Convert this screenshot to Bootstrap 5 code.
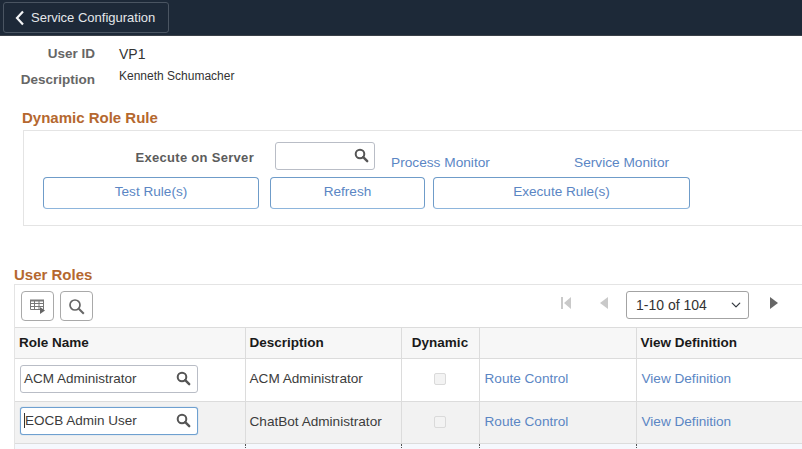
<!DOCTYPE html>
<html lang="en">
<head>
  <meta charset="UTF-8">
  <title>Service Configuration</title>
  <link href="https://cdn.jsdelivr.net/npm/bootstrap@5.3.2/dist/css/bootstrap.min.css" rel="stylesheet">
  <style>
    html, body { height: 449px; overflow: hidden; }
    body { font-family: "Liberation Sans", Arial, sans-serif; font-size: 14px; color: #333; background: #fff; }
    .top-bar { height: 36px; background: #1d2938; padding: 2px 3px; border-bottom: 1px solid #3a4048; }
    .back-btn { width: 166px; height: 31px; gap: 6px; padding: 0 0 0 11px; font-size: 13px; color: #e4e7ea; background: #1d2938; border: 1px solid #4a5562; border-radius: 3px; }
    .back-btn:hover { color: #fff; }
    .info-area { padding-top: 8px; }
    .info-row { display: flex; }
    .info-label { width: 95px; text-align: right; font-weight: 700; font-size: 13.500px; color: #666; }
    .info-value { margin-left: 24px; color: #333; }
    .row-id { height: 23px; line-height: 20px; }
    .row-desc { height: 27px; }
    .row-desc .info-label { line-height: 25px; }
    .row-desc .info-value { font-size: 12px; line-height: 19px; }
    .section-title { font-size: 15px; font-weight: 700; color: #b5682f; line-height: 18px; margin: 0; }
    .rule-title { margin: 15px 0 3px 22px; }
    .rule-box { margin-left: 23px; height: 96px; border: 1px solid #e4e4e4; border-right: 0; padding: 11px 0 0 19px; }
    .server-row { height: 35px; }
    .server-label { width: 211px; text-align: right; font-weight: 700; font-size: 13px; color: #5c5c5c; line-height: 31px; letter-spacing: .3px; }
    .prompt { position: relative; display: block; border: 1px solid #b9bdc6; border-radius: 3px; background: #fff; }
    .prompt svg { position: absolute; top: 5px; right: 6px; }
    .server-prompt { width: 100px; height: 28px; margin-left: 21px; }
    .server-prompt svg { right: 5px; }
    .mon-link { font-size: 13.700px; color: #5b86c4; text-decoration: none; line-height: 16px; margin-top: 13px; }
    .mon-first { margin-left: 16px; width: 183px; }
    .rule-btns { gap: 11px; }
    .rule-btn { height: 32px; padding: 0 0 1px; font-size: 13.600px; color: #5b86c4; background: #fff; border: 1px solid #6f9cc9; border-bottom-color: #8db5dc; border-radius: 4px; }
    .rule-btn:hover { color: #3c6cb0; background: #fff; border-color: #6f9cc9; }
    .b-test { width: 216px; }
    .b-refresh { width: 155px; }
    .b-exec { width: 257px; margin-left: -3px; }
    .roles-title { margin: 40px 0 0 14px; }
    .roles-box { margin-left: 14px; border: 1px solid #e4e4e4; border-right: 0; border-bottom: 0; }
    .grid-tools { height: 42px; padding: 6px 0 0 6px; gap: 6px; }
    .tool-btn { width: 33px; height: 30px; padding: 0; background: #fff; border: 1px solid #a9a9a9; border-radius: 4px; }
    .pager { margin-left: auto; }
    .pager svg { margin-top: 5px; }
    .pager .pager-first { margin-right: 29px; }
    .pager .pager-prev { margin-right: 18px; }
    .page-pick { width: 123px; height: 28px; padding: 0 0 0 9px; font-size: 14px; color: #333; border: 1px solid #a3a3a3; border-radius: 3px; background-position: right 6px center; background-size: 12px 10px; }
    .pager .pager-next { margin-left: 21px; margin-right: 24px; }
    .roles-grid { table-layout: fixed; width: 788px; margin: 0; border-collapse: collapse; }
    .roles-grid th, .roles-grid td { padding: 0 0 0 4px; border: 1px solid #dcdcdc; vertical-align: middle; font-size: 13.600px; color: #3c3c3c; }
    .roles-grid th { height: 31px; background: #f7f7f7; font-size: 13.500px; color: #1a1a1a; font-weight: 700; }
    .roles-grid td { height: 42.500px; padding-bottom: 2px; background: #fff; }
    .roles-grid tr.alt td { background: #f2f2f2; padding-bottom: 1px; }
    .roles-grid tr.alt td:first-child { padding-bottom: 3px; }
    .roles-grid tr.next-row td { height: 8px; padding: 0; background: #f5f8fd; border: 0; border-top: 1px dotted #3f6da8; border-right: 1px dotted #555; }
    .roles-grid th:first-child, .roles-grid td:first-child { border-left: 0; }
    .roles-grid td:first-child { padding-left: 5px; }
    .role-prompt { width: 178px; height: 28px; font-size: 13.500px; line-height: 26px; padding-left: 3px; color: #3c3c3c; }
    .role-focus { border-color: #6ea0d0; box-shadow: 0 0 1px #6ea0d0; }
    .text-cursor { border-left: 1px solid #333; }
    .grid-link { font-size: 13.600px; color: #5b86c4; text-decoration: none; padding-left: 1px; }
    .roles-grid th.dyn-head { padding: 0; text-align: center; }
    .roles-grid td.dyn-cell { padding-left: 0; text-align: center; }
    .dyn-check { display: inline-block; width: 12px; height: 12px; border: 1px solid #dadada; border-radius: 2px; background: #f3f3f3; vertical-align: middle; }
  </style>
</head>
<body>

  <div class="top-bar">
    <button type="button" class="btn back-btn d-flex align-items-center">
      <svg width="10" height="16" viewBox="0 0 10 16"><path d="M8 1.500 2 8l6 6.500" fill="none" stroke="#f2f4f6" stroke-width="2.200"/></svg>
      <span>Service Configuration</span>
    </button>
  </div>

  <div class="info-area">
    <div class="info-row row-id"><div class="info-label">User ID</div><div class="info-value">VP1</div></div>
    <div class="info-row row-desc"><div class="info-label">Description</div><div class="info-value">Kenneth Schumacher</div></div>
  </div>

  <h2 class="section-title rule-title">Dynamic Role Rule</h2>
  <div class="rule-box">
    <div class="server-row d-flex">
      <div class="server-label">Execute on Server</div>
      <span class="prompt server-prompt">
        <svg width="15" height="15" viewBox="0 0 15 15"><circle cx="6" cy="6" r="4.300" fill="none" stroke="#555" stroke-width="2"/><path d="m9.200 9.200 4 4" stroke="#555" stroke-width="2.400" stroke-linecap="round"/></svg>
      </span>
      <a href="#" class="mon-link mon-first">Process Monitor</a>
      <a href="#" class="mon-link">Service Monitor</a>
    </div>
    <div class="rule-btns d-flex">
      <button type="button" class="btn rule-btn b-test">Test Rule(s)</button>
      <button type="button" class="btn rule-btn b-refresh">Refresh</button>
      <button type="button" class="btn rule-btn b-exec">Execute Rule(s)</button>
    </div>
  </div>

  <h2 class="section-title roles-title">User Roles</h2>
  <div class="roles-box">
    <div class="grid-tools d-flex">
      <button type="button" class="btn tool-btn">
        <svg width="18" height="17" viewBox="0 0 18 17"><path d="M1.500 2.500h13v9h-13zM1.500 5.500h13M1.500 8.500h13M5.500 2.500v9M10 2.500v9" fill="none" stroke="#777"/><path d="M1 1.500h14v2H1z" fill="#777"/><path d="m11 9 5 3.500-5 3.500z" fill="#666"/></svg>
      </button>
      <button type="button" class="btn tool-btn">
        <svg width="17" height="17" viewBox="0 0 17 17"><circle cx="7" cy="7" r="5" fill="none" stroke="#666" stroke-width="1.700"/><path d="m10.800 10.800 5 5" stroke="#666" stroke-width="2"/></svg>
      </button>
      <div class="pager d-flex align-items-start">
        <svg class="pager-first" width="10" height="14" viewBox="0 0 10 14"><path d="M0 1h2v12H0zM10 1v12L3 7z" fill="#c9c9c9"/></svg>
        <svg class="pager-prev" width="8" height="14" viewBox="0 0 8 14"><path d="M8 1v12L0 7z" fill="#c9c9c9"/></svg>
        <select class="form-select page-pick"><option>1-10 of 104</option></select>
        <svg class="pager-next" width="8" height="14" viewBox="0 0 8 14"><path d="M0 1v12l8-6z" fill="#666"/></svg>
      </div>
    </div>

    <table class="roles-grid">
      <colgroup><col style="width:230px"><col style="width:156px"><col style="width:78px"><col style="width:157px"><col style="width:167px"></colgroup>
      <thead>
        <tr><th>Role Name</th><th>Description</th><th class="dyn-head">Dynamic</th><th></th><th>View Definition</th></tr>
      </thead>
      <tbody>
        <tr>
          <td><span class="prompt role-prompt">ACM Administrator<svg width="15" height="15" viewBox="0 0 15 15"><circle cx="6" cy="6" r="4.300" fill="none" stroke="#555" stroke-width="2"/><path d="m9.200 9.200 4 4" stroke="#555" stroke-width="2.400" stroke-linecap="round"/></svg></span></td>
          <td>ACM Administrator</td>
          <td class="dyn-cell"><span class="dyn-check"></span></td>
          <td><a href="#" class="grid-link">Route Control</a></td>
          <td><a href="#" class="grid-link">View Definition</a></td>
        </tr>
        <tr class="alt">
          <td><span class="prompt role-prompt role-focus"><span class="text-cursor"></span>EOCB Admin User<svg width="15" height="15" viewBox="0 0 15 15"><circle cx="6" cy="6" r="4.300" fill="none" stroke="#555" stroke-width="2"/><path d="m9.200 9.200 4 4" stroke="#555" stroke-width="2.400" stroke-linecap="round"/></svg></span></td>
          <td>ChatBot Administrator</td>
          <td class="dyn-cell"><span class="dyn-check"></span></td>
          <td><a href="#" class="grid-link">Route Control</a></td>
          <td><a href="#" class="grid-link">View Definition</a></td>
        </tr>
        <tr class="next-row"><td></td><td></td><td></td><td></td><td></td></tr>
      </tbody>
    </table>
  </div>

  <script src="https://cdn.jsdelivr.net/npm/bootstrap@5.3.2/dist/js/bootstrap.bundle.min.js"></script>
</body>
</html>
